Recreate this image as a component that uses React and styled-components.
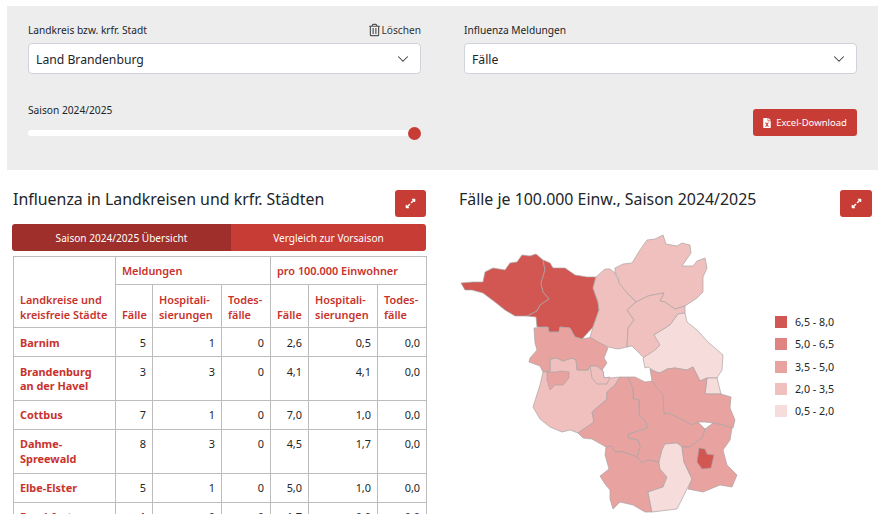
import React from "react";
import styled, { createGlobalStyle } from "styled-components";
import { FaRegTrashAlt, FaExpandAlt, FaFileExcel } from "react-icons/fa";

const RED = "#c83c36";
const DARK_RED = "#9e2f2a";
const TEXT_RED = "#c8322d";
const LINE = "#bdbdbd";

const GlobalStyle = createGlobalStyle`
  html, body {
    margin: 0;
    height: 514px;
    overflow: hidden;
    background: #fff;
  }
  body {
    font-family: "Noto Sans", "Open Sans", sans-serif;
    color: #212529;
  }
`;

const Page = styled.div`
  padding-top: 6px;
`;

const FilterPanel = styled.section`
  margin: 0 2px 0 7px;
  height: 164px;
  box-sizing: border-box;
  padding: 16px 21px 0;
  background: #ededed;
  display: grid;
  grid-template-columns: 393px 393px;
  column-gap: 43px;
  align-content: start;
`;

const Field = styled.div`
  display: flex;
  flex-direction: column;
`;

const LabelRow = styled.div`
  height: 15px;
  margin-bottom: 6px;
  display: flex;
  justify-content: space-between;
  align-items: center;
  font-size: 10.2px;
`;

const ClearLink = styled.span`
  display: flex;
  align-items: center;
  color: #333;
  svg {
    width: 11px;
    height: 14px;
    color: #555;
    margin-right: 1px;
  }
`;

const SelectBox = styled.div`
  height: 31px;
  box-sizing: border-box;
  padding: 1px 11px 0 7px;
  background: #fff;
  border: 1px solid #ced4da;
  border-radius: 4px;
  display: flex;
  align-items: center;
  justify-content: space-between;
  font-size: 12.2px;
  svg {
    width: 12px;
    height: 12px;
  }
`;

const SliderField = styled.div`
  margin-top: 28px;
`;

const SliderTrack = styled.div`
  position: relative;
  height: 6px;
  margin-top: 13px;
  background: #fff;
  border-radius: 3px;
`;

const SliderThumb = styled.span`
  position: absolute;
  right: 0;
  top: -3.5px;
  width: 13px;
  height: 13px;
  border-radius: 50%;
  background: ${RED};
`;

const DownloadCell = styled.div`
  margin-top: 35px;
  display: flex;
  justify-content: flex-end;
`;

const DownloadButton = styled.div`
  width: 104px;
  height: 27px;
  box-sizing: border-box;
  border-radius: 3px;
  background: ${RED};
  color: #fff;
  font-size: 9.5px;
  display: flex;
  align-items: center;
  justify-content: center;
  gap: 5px;
  svg {
    width: 8px;
    height: 10px;
  }
`;

const Columns = styled.div`
  margin-top: 20px;
  display: grid;
  grid-template-columns: 414px 424px;
  column-gap: 22px;
  padding-left: 12px;
`;

const HeadingRow = styled.div`
  height: 27px;
  display: flex;
  justify-content: space-between;
  align-items: flex-start;
  padding-left: ${(p) => p.$indent || 1}px;
`;

const Title = styled.h2`
  margin: 0;
  font-size: 15.9px;
  font-weight: 400;
  line-height: 19px;
`;

const ExpandButton = styled.div`
  width: ${(p) => p.$width || 31}px;
  height: 27px;
  border-radius: 3px;
  background: ${RED};
  color: #fff;
  display: flex;
  align-items: center;
  justify-content: center;
  svg {
    width: 11px;
    height: 11px;
  }
`;

const Tabs = styled.div`
  margin-top: 7px;
  height: 27px;
  border-radius: 3px;
  overflow: hidden;
  display: grid;
  grid-template-columns: 219px 195px;
`;

const Tab = styled.div`
  background: ${(p) => (p.$active ? DARK_RED : RED)};
  color: #fff;
  font-size: 10.1px;
  display: flex;
  align-items: center;
  justify-content: center;
`;

const Table = styled.table`
  margin: 5px 0 0 1px;
  width: 413px;
  table-layout: fixed;
  border-collapse: collapse;
  font-size: 10.9px;
  line-height: 14.6px;
  th, td {
    border: 1px solid ${LINE};
    box-sizing: border-box;
  }
  th {
    padding: 7px 6px 5.5px;
    line-height: 15px;
    color: ${TEXT_RED};
    font-weight: 600;
    text-align: left;
    vertical-align: bottom;
  }
  td {
    padding: 7.5px 6px 6px;
    text-align: right;
    vertical-align: top;
  }
`;

const GroupHead = styled.th`
  && {
    padding-top: 6.5px;
    padding-bottom: 5.5px;
    line-height: 14.6px;
    vertical-align: middle;
  }
`;

const NameCell = styled.td`
  && {
    text-align: left;
    font-weight: 700;
    color: ${TEXT_RED};
  }
`;

const MapRow = styled.div`
  margin-top: 8px;
  display: flex;
  align-items: flex-start;
`;

const MapSvg = styled.svg`
  display: block;
  width: 320px;
  height: 289px;
  flex: none;
  polygon {
    stroke: #aaa3a3;
    stroke-width: 0.7;
    stroke-linejoin: round;
  }
`;

const Legend = styled.ul`
  list-style: none;
  margin: 91px 0 0 7px;
  padding: 0;
  display: flex;
  flex-direction: column;
  gap: 10.3px;
`;

const LegendItem = styled.li`
  display: flex;
  align-items: center;
  gap: 8px;
  height: 12px;
  font-size: 10.7px;
`;

const Swatch = styled.span`
  width: 12px;
  height: 12px;
  background: ${(p) => p.$color};
`;

const C1 = "#d25753";
const C2 = "#df8480";
const C3 = "#e8a3a0";
const C4 = "#efc0bd";
const C5 = "#f6dddc";

const legend = [
  [C1, "6,5 - 8,0"],
  [C2, "5,0 - 6,5"],
  [C3, "3,5 - 5,0"],
  [C4, "2,0 - 3,5"],
  [C5, "0,5 - 2,0"],
];

const regions = [
  [C1, "461,283 465,290 472,290 483,293 495,302 505,310 515,316 527,316 537,311 540,305 549,299 543,292 541,283 545,270 543,260 536,254 530,256 522,255 517,262 510,263 505,270 493,268 485,272 483,282 473,282"],
  [C1, "543,260 550,263 553,268 565,268 575,275 587,277 596,277 593,288 598,302 599,310 593,327 582,339 575,337 570,328 560,327 559,332 549,332 548,327 537,327 536,317 527,316 537,311 540,305 549,299 543,292 541,283 545,270"],
  [C4, "543,372 540,385 533,407 540,419 550,427 562,432 570,430 578,433 594,422 592,412 607,399 607,392 615,385 620,377 610,378 604,378 603,371 597,366 590,366 588,370 577,370 576,360 572,358 563,361 557,358 550,359 550,371"],
  [C3, "534,328 548,327 549,332 559,332 560,327 570,328 575,337 582,339 593,337 600,342 608,348 604,358 607,363 602,370 597,366 590,366 588,370 577,370 576,360 572,358 563,361 557,358 550,359 550,371 543,372 540,366 529,362 530,358 537,350 535,343"],
  [C3, "547,372 557,372 560,371 569,372 569,378 563,385 555,385 550,390 547,380"],
  [C4, "590,366 592,378 597,384 607,384 610,377 604,378 603,371 597,366"],
  [C4, "596,277 605,269 610,269 615,273 618,280 628,294 636,302 627,310 634,320 628,328 627,347 618,349 608,347 598,342 590,337 593,327 599,310 598,302 593,288"],
  [C4, "615,268 623,264 632,263 640,250 647,240 655,239 663,235 666,244 677,246 682,243 690,245 691,253 682,266 693,266 697,261 705,258 707,268 703,277 703,292 697,298 685,306 675,309 665,302 660,301 664,293 658,294 648,296 637,302 628,294 619,283 618,277 615,272"],
  [C4, "636,302 648,296 658,294 664,293 660,301 665,302 675,309 685,306 685,313 678,314 670,325 654,335 662,343 653,353 644,358 638,352 632,346 627,347 628,328 634,320 627,310"],
  [C5, "685,313 687,322 697,330 708,342 723,355 722,370 717,378 707,378 700,381 693,367 687,370 675,368 667,369 660,373 656,372 648,367 645,368 643,358 655,350 660,345 654,335 670,325 678,314"],
  [C5, "707,378 717,378 721,394 705,394"],
  [C3, "650,369 656,372 660,373 667,369 675,368 687,370 693,367 700,381 707,378 705,394 721,394 731,397 730,408 735,420 733,428 723,425 713,423 705,422 698,422 692,425 683,420 668,413 664,414 662,397 652,381"],
  [C3, "628,377 635,377 645,382 652,381 663,395 664,414 668,413 683,420 692,425 698,422 705,429 703,437 690,447 682,447 677,443 665,444 662,450 659,462 648,460 642,463 637,457 640,447 638,440 628,438 628,434 647,428 646,422 639,415 639,400 633,399 633,389"],
  [C3, "620,377 628,377 633,389 633,399 639,400 639,415 646,422 647,428 628,434 628,438 638,440 640,447 637,457 623,452 615,452 611,446 606,447 592,439 583,438 578,433 594,422 592,412 607,399 607,392 615,385"],
  [C3, "606,447 611,446 615,452 623,452 637,457 642,463 648,460 659,462 660,469 667,477 663,487 648,492 652,512 645,512 633,505 620,502 613,509 610,499 610,490 605,484 600,476 609,469 605,455"],
  [C5, "665,444 677,443 682,447 684,462 692,479 687,489 677,509 652,512 648,492 663,487 667,477 660,469 659,462 662,450"],
  [C3, "705,429 713,423 723,425 732,428 730,440 723,450 727,465 737,475 732,487 720,485 703,492 688,489 692,479 684,462 682,447 690,447 703,437"],
  [C1, "699,448 705,449 707,454 714,455 711,468 702,469 697,462"],
];

const rows = [
  [["Barnim"], 5, 1, 0, "2,6", "0,5", "0,0"],
  [["Brandenburg", "an der Havel"], 3, 3, 0, "4,1", "4,1", "0,0"],
  [["Cottbus"], 7, 1, 0, "7,0", "1,0", "0,0"],
  [["Dahme-", "Spreewald"], 8, 3, 0, "4,5", "1,7", "0,0"],
  [["Elbe-Elster"], 5, 1, 0, "5,0", "1,0", "0,0"],
  [["Frankfurt", "(Oder)"], 1, 0, 0, "1,7", "0,0", "0,0"],
];

const Chevron = () => (
  <svg viewBox="0 0 16 16" fill="none" stroke="#343a40" strokeWidth="1.4" strokeLinecap="round" strokeLinejoin="round">
    <path d="m2 5 6 6 6-6" />
  </svg>
);

export default function App() {
  return (
    <Page>
      <GlobalStyle />
      <FilterPanel>
        <Field>
          <LabelRow>
            <span>Landkreis bzw. krfr. Stadt</span>
            <ClearLink>
              <FaRegTrashAlt />
              Löschen
            </ClearLink>
          </LabelRow>
          <SelectBox>
            Land Brandenburg
            <Chevron />
          </SelectBox>
          <SliderField>
            <LabelRow>Saison 2024/2025</LabelRow>
            <SliderTrack>
              <SliderThumb />
            </SliderTrack>
          </SliderField>
        </Field>
        <Field>
          <LabelRow>Influenza Meldungen</LabelRow>
          <SelectBox>
            Fälle
            <Chevron />
          </SelectBox>
          <DownloadCell>
            <DownloadButton>
              <FaFileExcel />
              Excel-Download
            </DownloadButton>
          </DownloadCell>
        </Field>
      </FilterPanel>

      <Columns>
        <div>
          <HeadingRow>
            <Title>Influenza in Landkreisen und krfr. Städten</Title>
            <ExpandButton>
              <FaExpandAlt />
            </ExpandButton>
          </HeadingRow>
          <Tabs>
            <Tab $active>Saison 2024/2025 Übersicht</Tab>
            <Tab>Vergleich zur Vorsaison</Tab>
          </Tabs>
          <Table>
            <colgroup>
              <col style={{ width: 102 }} />
              <col style={{ width: 37 }} />
              <col style={{ width: 69 }} />
              <col style={{ width: 49 }} />
              <col style={{ width: 38 }} />
              <col style={{ width: 69 }} />
              <col style={{ width: 49 }} />
            </colgroup>
            <thead>
              <tr>
                <th rowSpan={2}>
                  Landkreise und
                  <br />
                  kreisfreie Städte
                </th>
                <GroupHead colSpan={3}>Meldungen</GroupHead>
                <GroupHead colSpan={3}>pro 100.000 Einwohner</GroupHead>
              </tr>
              <tr>
                <th>Fälle</th>
                <th>
                  Hospitali-
                  <br />
                  sierungen
                </th>
                <th>
                  Todes-
                  <br />
                  fälle
                </th>
                <th>Fälle</th>
                <th>
                  Hospitali-
                  <br />
                  sierungen
                </th>
                <th>
                  Todes-
                  <br />
                  fälle
                </th>
              </tr>
            </thead>
            <tbody>
              {rows.map(([name, ...values]) => (
                <tr key={name[0]}>
                  <NameCell>
                    {name.map((line, i) => (
                      <React.Fragment key={line}>
                        {i > 0 && <br />}
                        {line}
                      </React.Fragment>
                    ))}
                  </NameCell>
                  {values.map((v, i) => (
                    <td key={i}>{v}</td>
                  ))}
                </tr>
              ))}
            </tbody>
          </Table>
        </div>

        <div>
          <HeadingRow $indent={11}>
            <Title>Fälle je 100.000 Einw., Saison 2024/2025</Title>
            <ExpandButton $width={32}>
              <FaExpandAlt />
            </ExpandButton>
          </HeadingRow>
          <MapRow>
            <MapSvg viewBox="448 225 320 289">
              {regions.map(([color, points], i) => (
                <polygon key={i} fill={color} points={points} />
              ))}
            </MapSvg>
            <Legend>
              {legend.map(([color, label]) => (
                <LegendItem key={label}>
                  <Swatch $color={color} />
                  {label}
                </LegendItem>
              ))}
            </Legend>
          </MapRow>
        </div>
      </Columns>
    </Page>
  );
}
